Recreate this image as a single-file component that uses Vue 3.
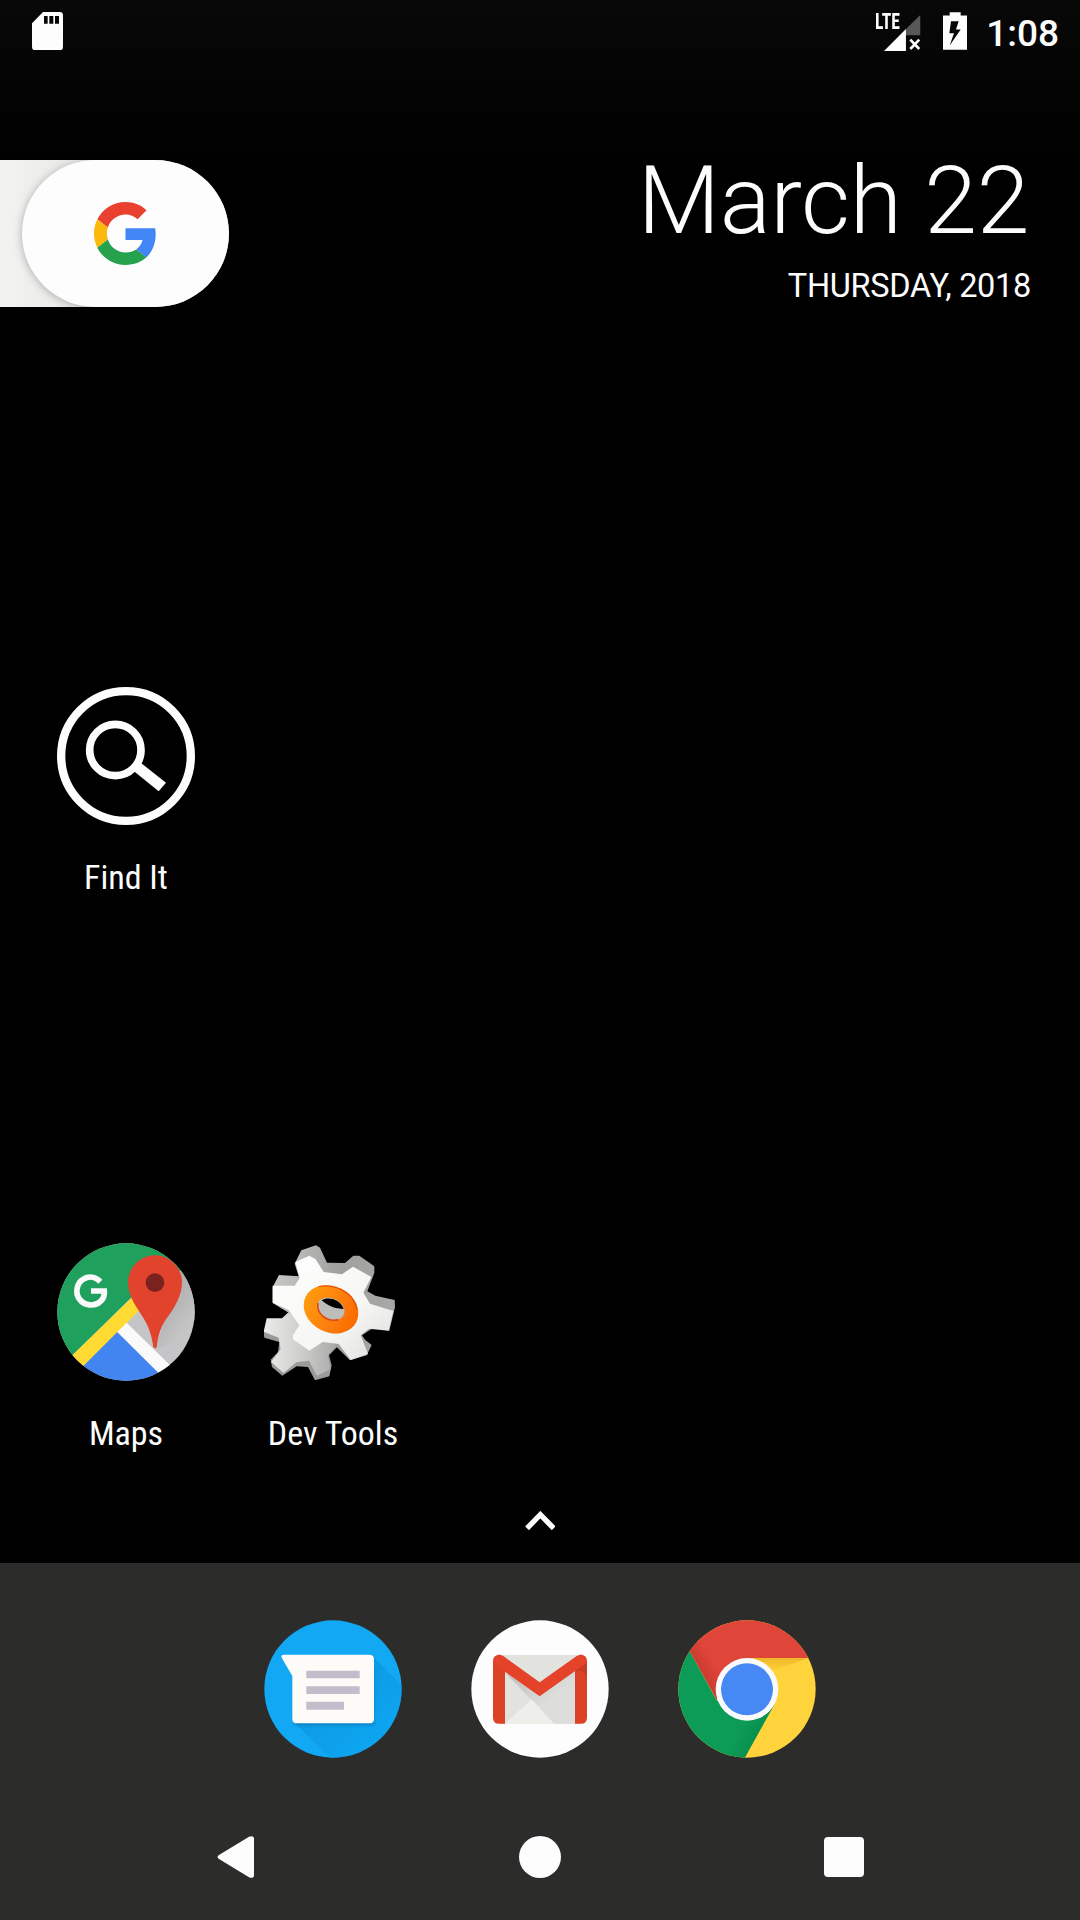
<script setup>
const time = '1:08'
const date = 'March 22'
const weekday = 'THURSDAY, 2018'
</script>

<template>
  <main class="home">
    <header class="status">
      <svg class="sd" viewBox="96 37 93 115">
        <path fill="#fdfdfd" fill-rule="evenodd" d="M129 37H179Q189 37 189 47V142Q189 152 179 152H106Q96 152 96 142V71ZM132 49V72H143V49ZM148 49V72H160V49ZM165 49V72H177V49Z" />
      </svg>
      <div class="signal">
        <span class="lte">LTE</span>
        <svg class="bars" viewBox="105 44 110 108">
          <path fill="#585858" d="M214 44V105H171V86Z" />
          <path fill="#fdfdfd" d="M105 152L171 86V152Z" />
          <path stroke="#fdfdfd" stroke-width="8" d="M184 118L211 146M211 118L184 146" />
        </svg>
      </div>
      <svg class="battery" viewBox="279 36 72 113">
        <path fill="#fdfdfd" fill-rule="evenodd" d="M299 36H332V46H351V149H279V46H299ZM303 63L298 99H312L299 136L332 88H318L326 63Z" />
      </svg>
      <span class="time">{{ time }}</span>
    </header>

    <section class="top">
      <div class="tab">
        <div class="pill">
          <svg class="google" viewBox="0 0 48 48">
            <path fill="#ea4030" d="M24 9.5c3.54 0 6.71 1.22 9.21 3.6l6.85-6.85C35.9 2.38 30.47 0 24 0 14.62 0 6.51 5.38 2.56 13.22l7.98 6.19C12.43 13.72 17.74 9.5 24 9.5z" />
            <path fill="#4285f4" d="M46.98 24.55c0-1.57-.15-3.09-.38-4.55H24v9.02h12.94c-.58 2.96-2.26 5.48-4.78 7.18l7.73 6c4.51-4.18 7.09-10.36 7.09-17.65z" />
            <path fill="#fbb90b" d="M10.53 28.59c-.48-1.45-.76-2.99-.76-4.59s.27-3.14.76-4.59l-7.98-6.19C.92 16.46 0 20.12 0 24s.92 7.54 2.56 10.78l7.97-6.19z" />
            <path fill="#25a24b" d="M24 48c6.48 0 11.93-2.13 15.89-5.81l-7.73-6c-2.15 1.45-4.92 2.3-8.16 2.3-6.26 0-11.57-4.22-13.47-9.91l-7.98 6.19C6.51 42.62 14.62 48 24 48z" />
          </svg>
        </div>
      </div>
      <div class="datebox">
        <div class="date">{{ date }}</div>
        <div class="weekday">{{ weekday }}</div>
      </div>
    </section>

    <section class="apps first">
      <div class="app">
        <svg class="icon" viewBox="51 51 414 414">
          <circle cx="258" cy="258" r="194.500" fill="none" stroke="#fdfdfd" stroke-width="25" />
          <circle cx="226" cy="240" r="77" fill="none" stroke="#fdfdfd" stroke-width="23" />
          <path fill="#fdfdfd" d="M304 280L378 338L356 364L282 304Z" />
        </svg>
        <span class="label">Find It</span>
      </div>
    </section>

    <section class="apps second">
      <div class="app">
        <svg class="icon" viewBox="51 68 414 414">
          <defs>
            <clipPath id="mapClip"><circle cx="258" cy="275" r="206" /></clipPath>
            <linearGradient id="pinShade" x1="0" y1="0" x2="1" y2="1">
              <stop offset="0" stop-color="#9c9c9c" /><stop offset=".6" stop-color="#c4c3c4" />
            </linearGradient>
          </defs>
          <g clip-path="url(#mapClip)">
            <rect x="50" y="65" width="420" height="420" fill="#c5c4c6" />
            <path fill="url(#pinShade)" d="M346 384L425 150L520 245L390 375Z" />
            <path fill="#1fa15d" d="M40 60H420L424 150L345 190L270 235L98 404L40 460Z" />
            <path fill="#ffda32" d="M98 404L275 232L300 268L131 436L110 460L70 432Z" />
            <path fill="#4385f0" d="M131 436L232 335L356 458L340 490H120Z" />
            <path fill="#fafafa" d="M232 335L260 307L392 436L356 458Z" />
            <path fill="#e2432d" d="M345 105C300 105 264 142 264 186C264 222 282 250 302 280C330 320 336 352 340 380Q345 388 350 380C354 348 361 318 385 287C405 260 426 225 426 186C426 142 390 105 345 105Z" />
            <circle cx="345" cy="187" r="28" fill="#7b221f" />
          </g>
          <path fill="none" stroke="#fafafa" stroke-width="17" d="M181 184C166 169 146 167 131 176C109 188 105 218 118 236C133 257 165 260 182 243Q195 230 193 212H153" />
        </svg>
        <span class="label">Maps</span>
      </div>
      <div class="app">
        <svg class="icon" viewBox="72 68 414 414">
          <defs>
            <linearGradient id="gearFace" x1="0" y1="0" x2="1" y2="1">
              <stop offset="0" stop-color="#fff" /><stop offset=".6" stop-color="#f6f6f4" /><stop offset="1" stop-color="#ddd" />
            </linearGradient>
            <linearGradient id="gearSide" x1="0" y1="0" x2="1" y2="0">
              <stop offset="0" stop-color="#c8c8c6" /><stop offset=".55" stop-color="#a0a09e" /><stop offset="1" stop-color="#a8a8a6" />
            </linearGradient>
            <linearGradient id="backGear" x1="0" y1="0" x2="1" y2="0">
              <stop offset="0" stop-color="#ececea" /><stop offset=".5" stop-color="#cececc" /><stop offset="1" stop-color="#a8a8a6" />
            </linearGradient>
            <linearGradient id="ring" x1="0" y1="0" x2="1" y2="0">
              <stop offset="0" stop-color="#ff9b0c" /><stop offset="1" stop-color="#fa6a05" />
            </linearGradient>
            <filter id="gearSoft" x="-5%" y="-5%" width="110%" height="110%"><feGaussianBlur stdDeviation="1.800" /></filter>
          </defs>
          <g filter="url(#gearSoft)">
            <path fill="#9a9a98" d="M70 330L73 352L118 365L114 395L92 418L96 440L127 466L170 438L204 440L225 480L268 468L275 435L267 405L295 376L240 300H130Z" />
            <path fill="url(#backGear)" d="M80 294H126L160 262L250 360L292 374L263 404L272 447L231 466L207 421L169 426L131 458L93 425L122 387L116 352L71 334Z" />
            <path fill="url(#gearSide)" d="M184 90L228 75L240 82L261 127L315 128L340 106L358 106L403 138V157L382 213L406 226L464 239L465 260L448 331L400 322L366 345L375 358L395 374L380 405L330 420L250 340L98 248V200L117 164L176 168L164 130Z" />
            <path fill="url(#gearFace)" d="M166 125L208 106L227 117L251 155L306 162L339 139L394 170L370 217L390 250L460 272L446 331L387 325L362 345L384 401L332 419L296 371L248 365L208 391L159 357V345L178 315L145 268L98 247V196H164L179 174Z" />
            <ellipse cx="273" cy="267" rx="85" ry="69" transform="rotate(27 273 267)" fill="url(#ring)" />
            <path fill="none" stroke="#df3d06" stroke-width="4" opacity=".7" d="M235 199C275 190 340 210 351 266" />
            <ellipse cx="272" cy="266" rx="43" ry="32" transform="rotate(24 272 266)" fill="#bdbdbb" />
            <path fill="none" stroke="#e04a08" stroke-width="5" d="M234 248C228 280 260 306 295 298" />
            <path fill="#050505" d="M245 240C262 228 300 234 311 266C286 266 264 257 245 240Z" />
          </g>
        </svg>
        <span class="label">Dev Tools</span>
      </div>
    </section>

    <div class="caret">
      <svg viewBox="134 62 92 58"><path fill="none" stroke="#fdfdfd" stroke-width="16" d="M140 114L180 73L220 114" /></svg>
    </div>

    <footer class="dock">
      <div class="favorites">
        <svg class="icon" viewBox="42 59 414 414">
          <defs>
            <clipPath id="msgClip"><circle cx="249" cy="266" r="206" /></clipPath>
            <linearGradient id="msgShade" gradientUnits="userSpaceOnUse" x1="250" y1="250" x2="370" y2="400">
              <stop offset="0" stop-color="#088fd2" /><stop offset="1" stop-color="#0ba0eb" />
            </linearGradient>
            <filter id="soft" x="-20%" y="-20%" width="140%" height="140%"><feGaussianBlur stdDeviation="5" /></filter>
          </defs>
          <g clip-path="url(#msgClip)">
            <rect x="40" y="55" width="420" height="420" fill="#12a8f4" />
            <path fill="url(#msgShade)" opacity=".55" d="M368 168L500 300V500H265L133 366Z" />
            <path fill="#086da5" opacity=".6" filter="url(#soft)" d="M135 200H372V374H133Z" />
          </g>
          <path fill="#fcfbf7" d="M102 163H358Q372 163 372 177V355Q372 369 358 369H141Q127 369 127 355V227L96 174Q91 163 102 163Z" />
          <path fill="#c1bdca" d="M169 211H329V234H169ZM169 258H329V281H169ZM169 304H282V328H169Z" />
        </svg>
        <svg class="icon" viewBox="33 59 414 414">
          <defs>
            <linearGradient id="mailShade" x1="0" y1="0" x2="1" y2="1">
              <stop offset="0" stop-color="#b9b9b7" /><stop offset=".6" stop-color="#dddddb" />
            </linearGradient>
          </defs>
          <circle cx="240" cy="266" r="206" fill="#fdfdfd" />
          <path fill="#e2e2df" d="M118 164H362V370H118Z" />
          <path fill="url(#mailShade)" d="M134 215L239 288L345 210V370H282Z" />
          <path fill="#eeeeea" d="M135 370L215 297L282 370Z" />
          <path fill="#dc4226" d="M99 182H135V370H117Q99 370 99 352ZM345 182H381V352Q381 370 363 370H345Z" />
          <path fill="#b93422" d="M345 210L378 187L381 205V230Q370 205 345 215Z" opacity=".55" />
          <path fill="#e4432a" d="M99 182C99 164 119 158 131 168L239 246L349 168C362 158 381 164 381 182Q381 188 374 192L239 288L106 194Q99 190 99 182Z" />
        </svg>
        <svg class="icon" viewBox="39 59 414 414">
          <defs>
            <clipPath id="chromeClip"><circle cx="246" cy="266" r="206" /></clipPath>
            <linearGradient id="redShade" gradientUnits="userSpaceOnUse" x1="112" y1="228" x2="155" y2="203">
              <stop offset="0" stop-color="#c93a30" /><stop offset="1" stop-color="#df4538" />
            </linearGradient>
            <linearGradient id="yellowShade" x1="0" y1="0" x2="0" y2="1">
              <stop offset="0" stop-color="#eeb827" /><stop offset="1" stop-color="#ffd33b" />
            </linearGradient>
            <linearGradient id="greenShade" gradientUnits="userSpaceOnUse" x1="285" y1="385" x2="235" y2="360">
              <stop offset="0" stop-color="#08904e" /><stop offset="1" stop-color="#0d9c57" />
            </linearGradient>
          </defs>
          <g clip-path="url(#chromeClip)">
            <rect x="35" y="55" width="425" height="425" fill="#ffd33b" />
            <path fill="url(#yellowShade)" d="M246 173H430L320 213Z" />
            <path fill="url(#greenShade)" d="M30 90L76 156L155 300L246 345L328 313L238 475H30Z" />
            <path fill="url(#redShade)" d="M76 156L30 90V50H470V173H246L155 298Z" />
          </g>
          <circle cx="246" cy="267" r="94" fill="#fbfbfc" />
          <circle cx="246" cy="267" r="78" fill="#4688f4" />
        </svg>
      </div>
      <nav class="nav">
        <svg viewBox="0 0 42 42"><path fill="#fdfdfd" d="M4 19L34 .7Q39 -1 39 3V39Q39 43 34 41.300L4 23Q1 21 4 19Z" /></svg>
        <svg viewBox="0 0 42 42"><circle cx="21" cy="21" r="21" fill="#fdfdfd" /></svg>
        <svg viewBox="0 0 42 42"><rect x="1" y="1" width="40" height="40" rx="4" fill="#fdfdfd" /></svg>
      </nav>
    </footer>
  </main>
</template>

<style>
body { margin: 0; background: #000; }
</style>

<style scoped>
.home {
  width: 1080px;
  height: 1920px;
  display: flex;
  flex-direction: column;
  overflow: hidden;
  color: #fdfdfd;
  font-family: Roboto, "Noto Sans", sans-serif;
  background: linear-gradient(#080808, #030303 100px, #000 185px);
}
svg { display: block; flex: none; }
.status {
  height: 63px;
  box-sizing: border-box;
  padding: 12px 21px 0 32px;
  display: flex;
  align-items: flex-start;
}
.sd { width: 31px; height: 38.300px; margin-right: auto; }
.signal { width: 46px; display: grid; margin-right: 22px; }
.lte, .bars { grid-area: 1 / 1; }
.lte {
  font: 700 22px/22px "Roboto Condensed", Roboto, sans-serif;
  font-stretch: 75%;
  width: 31px;
  margin-top: -1px;
  transform: scaleX(.8);
  transform-origin: 0 0;
}
.bars { width: 36.600px; height: 36px; margin-top: 3px; justify-self: end; }
.battery { width: 24px; height: 38px; margin-right: 19.500px; }
.time { font-size: 37px; font-weight: 500; line-height: 44px; }
.top { height: 250px; display: flex; justify-content: space-between; }
.tab {
  width: 229px;
  height: 147px;
  margin-top: 97px;
  display: flex;
  justify-content: flex-end;
  overflow: hidden;
  border-radius: 0 73.500px 73.500px 0;
  background: linear-gradient(90deg, #f3f3f1, #ebebe9 60px);
}
.pill {
  width: 207px;
  border-radius: 73.500px;
  background: #fdfdfd;
  box-shadow: 0 1px 9px #aaa;
  display: flex;
  align-items: center;
  justify-content: center;
}
.google { width: 63px; height: 63px; margin-left: -1px; }
.datebox { text-align: right; padding: 82px 49px 0 0; }
.date { font-size: 95px; font-weight: 300; line-height: 112px; letter-spacing: -.35px; padding-right: 2px; }
.weekday { font-size: 32.500px; line-height: 38px; margin-top: 10px; letter-spacing: -.3px; }
.apps { display: flex; padding-left: 22.500px; height: 240px; }
.first { margin-top: 374px; }
.second { margin-top: 315.700px; }
.app { width: 207px; display: flex; flex-direction: column; align-items: center; }
.icon { width: 138px; height: 138px; }
.label {
  margin-top: 32px;
  font: 400 34px/40px "Roboto Condensed", Roboto, sans-serif;
  font-stretch: 75%;
  white-space: nowrap;
}
.caret { display: flex; justify-content: center; margin-top: 28px; }
.caret svg { width: 30.700px; height: 19.300px; }
.dock { margin-top: auto; height: 357px; background: #2c2c2b; }
.favorites { display: flex; justify-content: center; gap: 69px; padding-top: 56.600px; }
.nav { display: flex; justify-content: center; gap: 262px; margin-top: 78.500px; }
.nav svg { width: 42px; height: 42px; overflow: visible; }
</style>
